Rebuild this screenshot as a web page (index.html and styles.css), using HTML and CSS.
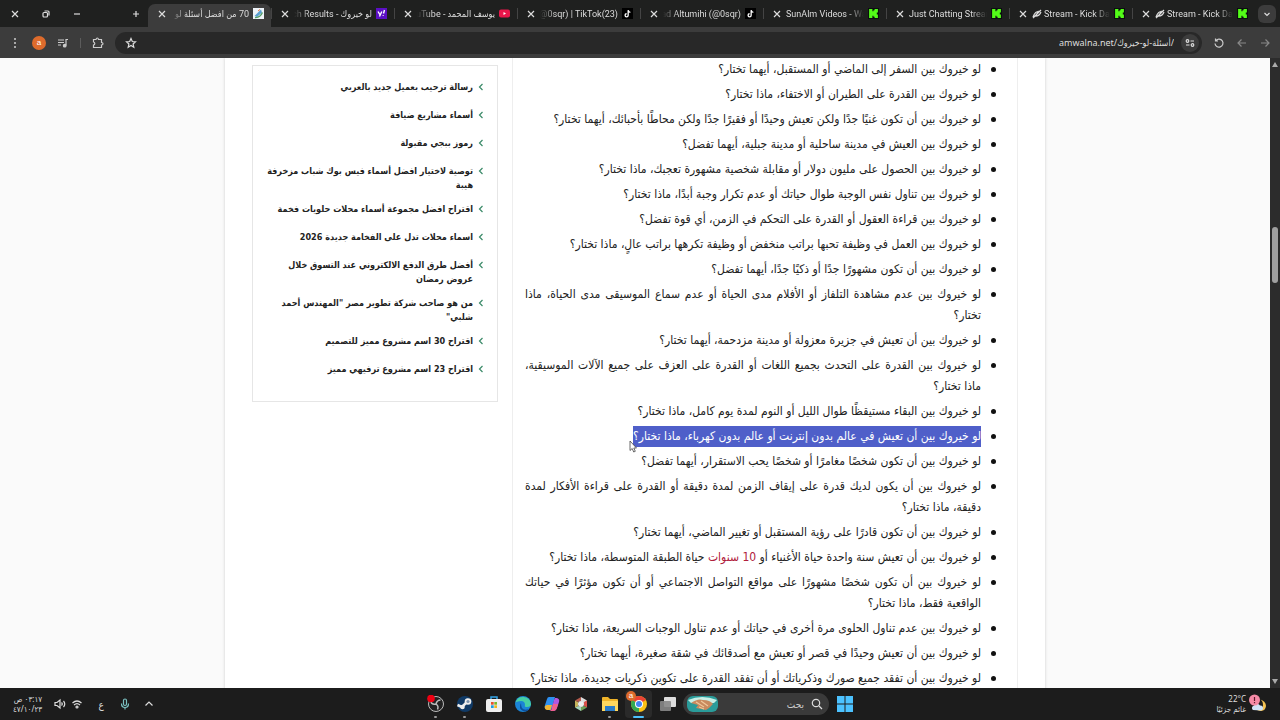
FILE: index.html
```
<!doctype html>
<html lang="ar" dir="rtl">
    <head>
        <meta charset="UTF-8" />
        <meta name="viewport" content="width=device-width, initial-scale=1.0" />
        <title>70 من افضل أسئلة لو خيروك</title>
        <link rel="stylesheet" href="styles.css">
    </head>
    <body>
        <svg class="defs" width="0" height="0" aria-hidden="true">
            <symbol id="x" viewBox="0 0 10 10"><path d="M2 2l6 6M8 2l-6 6" /></symbol>
            <symbol id="kick" viewBox="0 0 10 10"><rect width="10" height="10" fill="#0b0e0f" /><path d="M1 1h3v2h1V2h1V1h3v3H8v2h1v3H6V8H5V7H4v2H1z" fill="#53fc18" stroke="none" /></symbol>
            <symbol id="tiktok" viewBox="0 0 10 10"><rect width="10" height="10" fill="#000" stroke="none" /><path d="M5.6 2v4.6a1.4 1.4 0 1 1-1.4-1.4M5.6 2q.3 1.8 2 2" fill="none" stroke="#fff" stroke-width="1.2" /></symbol>
            <symbol id="prev" viewBox="0 0 8 8"><path d="M5.5 1 2.5 4l3 3" /></symbol>
        </svg>

        <div class="tabs">
            <button class="tab-search" aria-label="بحث في علامات التبويب"><svg class="line" width="10" height="10" viewBox="0 0 10 10"><path d="M2.5 4 5 6.5 7.5 4" /></svg></button>
            <div class="tab"><svg class="fav"><use href="#kick" /></svg><span class="title ltr"><svg class="line off" width="10" height="10" viewBox="0 0 10 10"><path d="M1 8q2-6 7-6M2 7q5 1 7-4M9 1 1 9M4 6l2-3" /></svg>Stream - Kick Das</span><button aria-label="إغلاق"><svg class="line x"><use href="#x" /></svg></button></div>
            <div class="tab"><svg class="fav"><use href="#kick" /></svg><span class="title ltr"><svg class="line off" width="10" height="10" viewBox="0 0 10 10"><path d="M1 8q2-6 7-6M2 7q5 1 7-4M9 1 1 9M4 6l2-3" /></svg>Stream - Kick Das</span><button aria-label="إغلاق"><svg class="line x"><use href="#x" /></svg></button></div>
            <div class="tab"><svg class="fav"><use href="#kick" /></svg><span class="title ltr">Just Chatting Stream</span><button aria-label="إغلاق"><svg class="line x"><use href="#x" /></svg></button></div>
            <div class="tab"><svg class="fav"><use href="#kick" /></svg><span class="title ltr">SunAlm Videos - Wat</span><button aria-label="إغلاق"><svg class="line x"><use href="#x" /></svg></button></div>
            <div class="tab"><svg class="fav"><use href="#tiktok" /></svg><span class="title"><bdi dir="ltr">nad Altumihi (@0sqr)</bdi></span><button aria-label="إغلاق"><svg class="line x"><use href="#x" /></svg></button></div>
            <div class="tab"><svg class="fav"><use href="#tiktok" /></svg><span class="title"><bdi dir="ltr">i (@0sqr) | TikTok(23)</bdi></span><button aria-label="إغلاق"><svg class="line x"><use href="#x" /></svg></button></div>
            <div class="tab"><svg class="fav" viewBox="0 0 11 11"><rect y="1.5" width="11" height="8" rx="2" fill="#e8164a" /><path d="M4.5 4v3L7 5.500z" fill="#fff" /></svg><span class="title">يوسف المحمد - uTube</span><button aria-label="إغلاق"><svg class="line x"><use href="#x" /></svg></button></div>
            <div class="tab"><svg class="fav" viewBox="0 0 11 11"><rect width="11" height="11" fill="#5b0fc4" /><path d="M2 3.500l1.800 3M5.800 3.500 3.500 8.500M8.500 2 7.500 5.500M7.200 7v.8" stroke="#fff" stroke-width="1.400" /></svg><span class="title">لو خيروك - rch Results</span><button aria-label="إغلاق"><svg class="line x"><use href="#x" /></svg></button></div>
            <div class="tab active"><svg class="fav" viewBox="0 0 11 11"><rect width="11" height="11" fill="#eef3f8" /><path d="M1.500 8 8 1.500l1 3L4 9z" fill="#5a9fd0" /><path d="M2 9.500q5 .5 7.500-5" fill="none" stroke="#4f9c62" stroke-width="1.300" /><path d="M5 3l2-1.500" stroke="#e07a4a" /></svg><span class="title">70 من افضل أسئلة لو</span><button aria-label="إغلاق"><svg class="line x"><use href="#x" /></svg></button></div>
            <button class="new-tab" aria-label="علامة تبويب جديدة"><svg class="line" width="10" height="10" viewBox="0 0 10 10"><path d="M5 2v6M2 5h6" /></svg></button>
            <div class="window-buttons">
                <button aria-label="تصغير"><svg class="line" width="10" height="10" viewBox="0 0 10 10"><path d="M2 5h6" /></svg></button>
                <button aria-label="استعادة"><svg class="line" width="10" height="10" viewBox="0 0 10 10"><rect x="2" y="3.500" width="4.500" height="4.500" rx="1" /><path d="M3.500 2H7q1 0 1 1v3.500" /></svg></button>
                <button aria-label="إغلاق النافذة"><svg class="line" width="10" height="10" viewBox="0 0 10 10"><path d="M2 2l6 6M8 2 2 8" /></svg></button>
            </div>
        </div>

        <div class="toolbar">
            <button class="dim" aria-label="رجوع"><svg class="line" width="12" height="12" viewBox="0 0 12 12"><path d="M2 6h8M6.500 2.500 10 6 6.500 9.500" /></svg></button>
            <button class="dim" aria-label="تقدم"><svg class="line" width="12" height="12" viewBox="0 0 12 12"><path d="M10 6H2M5.500 2.500 2 6l3.500 3.500" /></svg></button>
            <button aria-label="إعادة تحميل"><svg class="line" width="12" height="12" viewBox="0 0 12 12"><path d="M3 3.500A4 4 0 1 1 2 6.500M2.500 1.500v2.500H5" /></svg></button>
            <div class="address">
                <button class="site-info" aria-label="معلومات الموقع"><svg class="line" width="12" height="12" viewBox="0 0 12 12"><path d="M6.500 4H10M2 8h3.500" /><circle cx="3.500" cy="4" r="1.300" /><circle cx="8.500" cy="8" r="1.300" /></svg></button>
                <input type="text" dir="ltr" aria-label="العنوان" value="amwalna.net/أسئلة-لو-خيروك/">
                <button aria-label="إشارة مرجعية"><svg class="line" width="12" height="12" viewBox="0 0 12 12"><path d="M6 1.500l1.300 3 3.200.3-2.400 2.200.7 3.200L6 8.500l-2.800 1.700.7-3.200-2.400-2.200 3.200-.3z" /></svg></button>
            </div>
            <button aria-label="الإضافات"><svg class="line" width="12" height="12" viewBox="0 0 12 12"><path d="M1.500 2.500H4q.3-1.500 1.300-1.500T6.500 2.500h3v3q1.500.2 1.500 1.300T9.500 8v2.500h-8V8q1.300-.2 1.300-1.500T1.500 5z" /></svg></button>
            <span class="divider"></span>
            <button aria-label="الوسائط"><svg class="line" width="12" height="12" viewBox="0 0 12 12"><path d="M1 3h6M1 5.500h6M1 8h3M9 8.500V2.500h2" /><circle cx="7.700" cy="8.700" r="1.300" fill="#ccc" /></svg></button>
            <button class="avatar" aria-label="الحساب">a</button>
            <button aria-label="القائمة"><svg width="12" height="12" viewBox="0 0 12 12" fill="#ccc"><circle cx="6" cy="2" r="1" /><circle cx="6" cy="6" r="1" /><circle cx="6" cy="10" r="1" /></svg></button>
        </div>

        <div class="view">
            <div class="scrollbar">
                <span class="arrow up"></span>
                <span class="thumb"></span>
                <span class="arrow down"></span>
            </div>
            <div class="page">
                <div class="wrap">
                    <main class="article">
                        <ul>
                            <li>لو خيروك بين السفر إلى الماضي أو المستقبل، أيهما تختار؟</li>
                            <li>لو خيروك بين القدرة على الطيران أو الاختفاء، ماذا تختار؟</li>
                            <li>لو خيروك بين أن تكون غنيًا جدًا ولكن تعيش وحيدًا أو فقيرًا جدًا ولكن محاطًا بأحبائك، أيهما تختار؟</li>
                            <li>لو خيروك بين العيش في مدينة ساحلية أو مدينة جبلية، أيهما تفضل؟</li>
                            <li>لو خيروك بين الحصول على مليون دولار أو مقابلة شخصية مشهورة تعجبك، ماذا تختار؟</li>
                            <li>لو خيروك بين تناول نفس الوجبة طوال حياتك أو عدم تكرار وجبة أبدًا، ماذا تختار؟</li>
                            <li>لو خيروك بين قراءة العقول أو القدرة على التحكم في الزمن، أي قوة تفضل؟</li>
                            <li>لو خيروك بين العمل في وظيفة تحبها براتب منخفض أو وظيفة تكرهها براتب عالٍ، ماذا تختار؟</li>
                            <li>لو خيروك بين أن تكون مشهورًا جدًا أو ذكيًا جدًا، أيهما تفضل؟</li>
                            <li>لو خيروك بين عدم مشاهدة التلفاز أو الأفلام مدى الحياة أو عدم سماع الموسيقى مدى الحياة، ماذا تختار؟</li>
                            <li>لو خيروك بين أن تعيش في جزيرة معزولة أو مدينة مزدحمة، أيهما تختار؟</li>
                            <li>لو خيروك بين القدرة على التحدث بجميع اللغات أو القدرة على العزف على جميع الآلات الموسيقية، ماذا تختار؟</li>
                            <li>لو خيروك بين البقاء مستيقظًا طوال الليل أو النوم لمدة يوم كامل، ماذا تختار؟</li>
                            <li><span class="selected">لو خيروك بين أن تعيش في عالم بدون إنترنت أو عالم بدون كهرباء، ماذا تختار؟<svg class="cursor" width="8" height="13" viewBox="0 0 8 13"><path d="M1 1v9.500l2.200-2L4.700 12l1.600-.7L4.800 8H7.500z" fill="#fff" stroke="#444" stroke-width=".8" /></svg></span></li>
                            <li>لو خيروك بين أن تكون شخصًا مغامرًا أو شخصًا يحب الاستقرار، أيهما تفضل؟</li>
                            <li>لو خيروك بين أن يكون لديك قدرة على إيقاف الزمن لمدة دقيقة أو القدرة على قراءة الأفكار لمدة دقيقة، ماذا تختار؟</li>
                            <li>لو خيروك بين أن تكون قادرًا على رؤية المستقبل أو تغيير الماضي، أيهما تختار؟</li>
                            <li>لو خيروك بين أن تعيش سنة واحدة حياة الأغنياء أو <a href="#">10 سنوات</a> حياة الطبقة المتوسطة، ماذا تختار؟</li>
                            <li>لو خيروك بين أن تكون شخصًا مشهورًا على مواقع التواصل الاجتماعي أو أن تكون مؤثرًا في حياتك الواقعية فقط، ماذا تختار؟</li>
                            <li>لو خيروك بين عدم تناول الحلوى مرة أخرى في حياتك أو عدم تناول الوجبات السريعة، ماذا تختار؟</li>
                            <li>لو خيروك بين أن تعيش وحيدًا في قصر أو تعيش مع أصدقائك في شقة صغيرة، أيهما تختار؟</li>
                            <li>لو خيروك بين أن تفقد جميع صورك وذكرياتك أو أن تفقد القدرة على تكوين ذكريات جديدة، ماذا تختار؟</li>
                        </ul>
                    </main>
                    <aside class="sidebar">
                        <a href="#"><svg class="line"><use href="#prev" /></svg>رسالة ترحيب بعميل جديد بالعربي</a>
                        <a href="#"><svg class="line"><use href="#prev" /></svg>أسماء مشاريع ضيافة</a>
                        <a href="#"><svg class="line"><use href="#prev" /></svg>رموز ببجي مقبولة</a>
                        <a href="#"><svg class="line"><use href="#prev" /></svg>توصية لاختيار افضل أسماء فيس بوك شباب مزخرفة هيبة</a>
                        <a href="#"><svg class="line"><use href="#prev" /></svg>اقتراح افضل مجموعة أسماء محلات حلويات فخمة</a>
                        <a href="#"><svg class="line"><use href="#prev" /></svg>اسماء محلات تدل على الفخامة جديدة 2026</a>
                        <a href="#"><svg class="line"><use href="#prev" /></svg>أفضل طرق الدفع الالكتروني عند التسوق خلال عروض رمضان</a>
                        <a href="#"><svg class="line"><use href="#prev" /></svg>من هو صاحب شركة تطوير مصر "المهندس أحمد شلبي"</a>
                        <a href="#"><svg class="line"><use href="#prev" /></svg>اقتراح 30 اسم مشروع مميز للتصميم</a>
                        <a href="#"><svg class="line"><use href="#prev" /></svg>اقتراح 23 اسم مشروع ترفيهي مميز</a>
                    </aside>
                </div>
            </div>
        </div>

        <div class="taskbar">
            <div class="weather">
                <svg width="18" height="20" viewBox="0 0 18 20"><path d="M10 5q4 1 4 6t-6 5q8 3 9-4 0-5-7-7z" fill="#f6c453" /><path d="M4 16a2.500 2.500 0 0 1 1-4.500 3.500 3.500 0 0 1 6 0 2.500 2.500 0 0 1 1 5z" fill="#cfe2f7" /><circle cx="5.500" cy="6" r="5.500" fill="#f58aa6" /><path d="M5.500 3v4M5.500 8v1.200" stroke="#5a1c2e" stroke-width="1.200" /></svg>
                <p><bdi dir="ltr">22°C</bdi><br>غائم جزئيًا</p>
            </div>
            <div class="apps">
                <button aria-label="ابدأ"><svg viewBox="0 0 18 18"><path d="M1 1h7.500v7.500H1zM9.500 1H17v7.500H9.500zM1 9.500h7.500V17H1zM9.500 9.500H17V17H9.500z" fill="#4cc2ff" /></svg></button>
                <label class="search">
                    <svg class="line" width="12" height="12" viewBox="0 0 12 12"><circle cx="5" cy="5" r="3.700" /><path d="M8 8l3 3" /></svg>
                    <input type="text" placeholder="بحث">
                    <svg width="31" height="16" viewBox="0 0 31 16"><rect width="31" height="16" rx="6" fill="#2a9c9a" /><path d="M1 4q14-6 29 0l-3 3H4z" fill="#c9efe6" /><path d="M4 7q7-5 12-3 7 0 10 4l-4 4-3 2-5-1-5-1 2-3z" fill="#c98a5e" /><path d="M9 6l8 5M14 5l7 5M12 11l5 2" stroke="#f0c79a" stroke-width="1.200" /></svg>
                </label>
                <button aria-label="عرض المهام"><svg viewBox="0 0 18 18"><rect x="5" y="2" width="12" height="10" rx="1" fill="#ddd" /><rect x="1" y="6" width="11" height="10" rx="1" fill="#888" opacity=".9" /></svg></button>
                <button class="current" aria-label="Chrome"><svg viewBox="0 0 18 18"><circle cx="9" cy="9" r="8" fill="#fbc116" /><path d="M9 9 2.100 5A8 8 0 0 1 15.900 5z" fill="#ea4335" /><path d="M9 9 2.100 5A8 8 0 0 0 9 17z" fill="#34a853" /><circle cx="9" cy="9" r="4" fill="#fff" /><circle cx="9" cy="9" r="3" fill="#4285f4" /></svg><span class="badge">a</span></button>
                <button class="open" aria-label="مستكشف الملفات"><svg viewBox="0 0 18 18"><path d="M1 3q0-1 1-1h5l2 2h7q1 0 1 1v10H1z" fill="#f0b429" /><path d="M1 6h16v10H1z" fill="#ffd75e" /><path d="M4 11h10v5H4z" fill="#2b7cc9" /></svg></button>
                <button aria-label="تطبيق"><svg viewBox="0 0 18 18"><path d="M9 2l6 3.500L12 8 9 6z" fill="#ddd" /><path d="M15 5.500v7L12 11V7z" fill="#d8504a" /><path d="M15 12.500 9 16v-4l3-1z" fill="#6f9f58" /><path d="M9 16l-6-3.500L6 11l3 1z" fill="#a9d7bc" /><path d="M3 12.500v-7L6 7v4z" fill="#c7b55c" /><path d="M3 5.500 9 2v4L6 7z" fill="#b45a4c" /><circle cx="9" cy="9" r="3" fill="#eee" /></svg></button>
                <button aria-label="Copilot"><svg viewBox="0 0 18 18"><path d="M6 2h6l-3 11q-1 3-3 2l-3-1q-2-1-1-4l2-6q.500-2 2-2z" fill="#2d8ff0" /><path d="M4 10h5l-1.500 5H4q-3-1-2-4z" fill="#f0b535" /><path d="M12 3h2q3 1 2 4l-2 6q-1 3-3 3H7q2-1 2-4l2-7z" fill="#b257e0" /><path d="M10 9h5l-1.500 5q-1 2-3 2H7q2-1 2-3z" fill="#f0608c" /></svg></button>
                <button aria-label="Edge"><svg viewBox="0 0 18 18"><circle cx="9" cy="9" r="8" fill="#1b84d6" /><path d="M1.500 7.500a8 8 0 0 1 15.500 1.500q0 3-4 3-3 0-2-2 0-4-4-4-4 0-5.500 1.500z" fill="#46cfa4" /><path d="M7 8q-3 5 2 8 4 1 6-2-5 2-7-1-1-2-1-5z" fill="#0d4f9c" /></svg></button>
                <button aria-label="Microsoft Store"><svg viewBox="0 0 18 18"><path d="M6 5V2h6v3" fill="none" stroke="#35a5e8" stroke-width="1.500" /><rect x="1" y="4" width="16" height="13" rx="2" fill="#eee" /><path d="M6 7h2.700v2.700H6z" fill="#e8502f" /><path d="M9.300 7H12v2.700H9.300z" fill="#7ab82e" /><path d="M6 10.300h2.700V13H6z" fill="#1b9de2" /><path d="M9.300 10.300H12V13H9.300z" fill="#f5b51c" /></svg></button>
                <button class="open" aria-label="Steam"><svg viewBox="0 0 18 18"><circle cx="9" cy="9" r="8" fill="#103a66" /><path d="M1.500 10 6 12l4-4 2-4" fill="none" stroke="#eee" stroke-width="2.500" /><circle cx="12" cy="6.500" r="3.300" fill="#eee" /><circle cx="12" cy="6.500" r="1.600" fill="#7c93ad" /><circle cx="6.500" cy="12" r="2.300" fill="#eee" /></svg></button>
                <button class="open" aria-label="OBS"><svg viewBox="0 0 18 18"><circle cx="9" cy="9" r="7.500" fill="#222" stroke="#bbb" /><path d="M9 9q-4 1-5-2M9 9q1-4 4.500-4M9 9q3 2 1.500 5.500" fill="none" stroke="#bbb" stroke-width="1.500" /><circle cx="4" cy="3.500" r="3.800" fill="#f00012" /></svg></button>
            </div>
            <div class="tray">
                <svg class="line" width="12" height="12" viewBox="0 0 12 12"><path d="M2.500 7.500 6 4l3.500 3.500" /></svg>
                <svg class="line mic" width="12" height="12" viewBox="0 0 12 12"><rect x="4.500" y="1" width="3" height="6.500" rx="1.500" /><path d="M2.500 5.500q0 4 3.500 4t3.500-4M6 9.500v2" /></svg>
                <span class="lang">ع</span>
                <div class="net">
                    <svg class="line" width="12" height="12" viewBox="0 0 12 12"><path d="M1.500 5q4.500-4 9 0M3 7q3-2.800 6 0" /><circle cx="6" cy="9" r="1" /></svg>
                    <svg class="line" width="12" height="12" viewBox="0 0 12 12"><path d="M1 4.500h2L6 2v8L3 7.500H1zM7.500 4.500q1.500 1.500 0 3M9.500 3q2.500 3 0 6" /></svg>
                </div>
                <p>٠٣:١٧ ص<br><bdi dir="ltr">٤٧/١٠/٢٣</bdi></p>
            </div>
        </div>
    </body>
</html>
```

FILE: styles.css
```
* {
    margin: 0;
    padding: 0;
    box-sizing: border-box;
}
body {
    height: 100vh;
    display: flex;
    flex-direction: column;
    overflow: hidden;
    font-family: "Noto Sans", "DejaVu Sans Condensed", sans-serif;
    font-size: 12px;
    color: #222;
}
a {
    color: inherit;
    text-decoration: none;
}
button {
    border: 0;
    background: none;
    color: inherit;
    display: grid;
    place-items: center;
}
input {
    border: 0;
    outline: 0;
    background: none;
    color: inherit;
    font: inherit;
    min-width: 0;
}
.defs {
    position: absolute;
}
.line {
    fill: none;
    stroke: currentColor;
    stroke-width: 1.2;
}

/* tabs */
.tabs {
    height: 27px;
    flex: none;
    display: flex;
    align-items: center;
    background: #1f201f;
    color: #ddd;
    padding: 0 4px;
    font-family: Roboto, "DejaVu Sans Condensed", sans-serif;
    font-size: 9px;
}
.tab-search {
    width: 18px;
    height: 18px;
    margin-left: 3px;
    border-radius: 6px;
    background: #3c3c3c;
}
.tab {
    flex: 0 1 123px;
    min-width: 0;
    height: 23px;
    margin-top: 4px;
    padding: 0 7px 4px 9px;
    display: flex;
    align-items: center;
    gap: 4px;
    position: relative;
}
.tab::before {
    content: "";
    position: absolute;
    left: 0;
    top: 4px;
    height: 11px;
    border-left: 1px solid #444;
}
.fav {
    width: 11px;
    height: 11px;
    flex: none;
}
.title {
    flex: 1;
    min-width: 0;
    height: 18px;
    line-height: 18px;
    overflow: hidden;
    white-space: nowrap;
    mask-image: linear-gradient(to right, transparent, #000 16px);
}
.title.ltr {
    direction: ltr;
    mask-image: linear-gradient(to left, transparent, #000 16px);
}
.off {
    vertical-align: middle;
    margin-right: 2px;
}
.x {
    width: 10px;
    height: 10px;
}
.active {
    background: #3c3c3c;
    border-radius: 7px 7px 0 0;
}
.active::before {
    display: none;
}
.new-tab {
    margin-right: 7px;
}
.window-buttons {
    margin-right: auto;
    display: flex;
    gap: 21px;
    padding-left: 6px;
}

/* toolbar */
.toolbar {
    height: 31px;
    flex: none;
    display: flex;
    align-items: center;
    gap: 11px;
    padding: 0 9px;
    background: #3c3c3c;
    color: #ccc;
}
.dim {
    color: #888;
}
.address {
    flex: 1;
    height: 22px;
    border-radius: 11px;
    background: #282828;
    display: flex;
    align-items: center;
    gap: 7px;
    padding: 0 3px 0 10px;
    color: #ddd;
}
.address input {
    flex: 1;
    text-align: right;
    font-size: 9px;
}
.site-info {
    width: 18px;
    height: 18px;
    border-radius: 50%;
    background: #3c3c3c;
}
.divider {
    height: 10px;
    border-left: 1px solid #5c5c5c;
}
.avatar {
    width: 14px;
    height: 14px;
    border-radius: 50%;
    background: #dd6b2c;
    color: #fff;
    font-size: 8px;
    line-height: 14px;
}

/* page */
.view {
    flex: 1;
    min-height: 0;
    display: flex;
}
.scrollbar {
    width: 10px;
    background: #2c2c2c;
    display: flex;
    flex-direction: column;
    align-items: center;
    padding: 4px 0;
}
.arrow {
    border: 3px solid transparent;
}
.up {
    border-top: 0;
    border-bottom: 5px solid #aaa;
}
.down {
    border-bottom: 0;
    border-top: 5px solid #aaa;
    margin-top: auto;
}
.thumb {
    width: 6px;
    height: 9%;
    margin-top: 160px;
    border-radius: 3px;
    background: #a0a0a0;
}
.page {
    flex: 1;
    background: #fafafa;
    overflow: hidden;
}
.wrap {
    max-width: 820px;
    margin: 0 auto;
    padding: 0 27px;
    background: #fff;
    box-shadow: 0 0 3px #ccc;
    display: flex;
    align-items: flex-start;
    gap: 14px;
    font-family: "DejaVu Sans Condensed", "DejaVu Sans", sans-serif;
}
.article {
    flex: 1;
    border: 1px solid #eee;
    border-width: 0 1px;
    padding: 1px 36px 8px 12px;
}
.article li {
    line-height: 21px;
    margin-bottom: 4px;
    text-align: justify;
    list-style: none;
    position: relative;
}
.article li::before {
    content: "";
    position: absolute;
    right: -15px;
    top: 8px;
    width: 5px;
    height: 5px;
    border-radius: 50%;
    background: #111;
}
.article a {
    color: #b0203c;
}
.selected {
    display: inline-block;
    background: #4f5fc9;
    color: #fff;
    position: relative;
}
.cursor {
    position: absolute;
    left: -4px;
    top: 14px;
}
.sidebar {
    width: 246px;
    flex: none;
    margin-top: 7px;
    border: 1px solid #e6e6e6;
    padding: 9px 12px 16px 11px;
    font-size: 9px;
    font-weight: bold;
    line-height: 14px;
}
.sidebar a {
    display: flex;
    gap: 4px;
    min-height: 28px;
    padding: 5px 0;
}
.sidebar svg {
    width: 8px;
    height: 8px;
    flex: none;
    margin-top: 3px;
    color: #3a8a68;
}

/* taskbar */
.taskbar {
    height: 32px;
    flex: none;
    display: grid;
    grid-template-columns: 1fr auto 1fr;
    align-items: center;
    background: #1c1c1c;
    color: #ddd;
    padding: 0 13px;
    font-size: 8px;
    line-height: 10px;
}
.weather {
    display: flex;
    align-items: center;
    gap: 3px;
}
.apps {
    display: flex;
    align-items: center;
    gap: 2px;
}
.apps button {
    width: 27px;
    height: 28px;
    border-radius: 4px;
    position: relative;
}
.apps button svg {
    width: 18px;
    height: 18px;
}
.apps .current {
    background: #2a2a2a;
}
.open::after,
.current::after {
    content: "";
    position: absolute;
    bottom: 0;
    left: 12px;
    right: 12px;
    height: 2px;
    border-radius: 1px;
    background: #999;
}
.current::after {
    left: 8px;
    right: 8px;
    background: #4cc2ff;
}
.badge {
    position: absolute;
    left: 1px;
    top: 1px;
    width: 10px;
    height: 10px;
    border-radius: 50%;
    background: #dd6b2c;
    color: #fff;
    font-size: 8px;
    line-height: 9px;
}
.search {
    width: 146px;
    height: 22px;
    border-radius: 11px;
    background: #3a3a3a;
    display: flex;
    align-items: center;
    gap: 7px;
    padding: 0 6px 0 4px;
}
.search input {
    flex: 1;
    font-size: 10px;
}
.search input::placeholder {
    color: #ccc;
    opacity: 1;
}
.tray {
    justify-self: end;
    display: flex;
    align-items: center;
    gap: 12px;
}
.mic {
    color: #7cc4c4;
}
.lang {
    width: 12px;
    text-align: center;
    font-size: 10px;
}
.net {
    display: flex;
    gap: 5px;
}
```
